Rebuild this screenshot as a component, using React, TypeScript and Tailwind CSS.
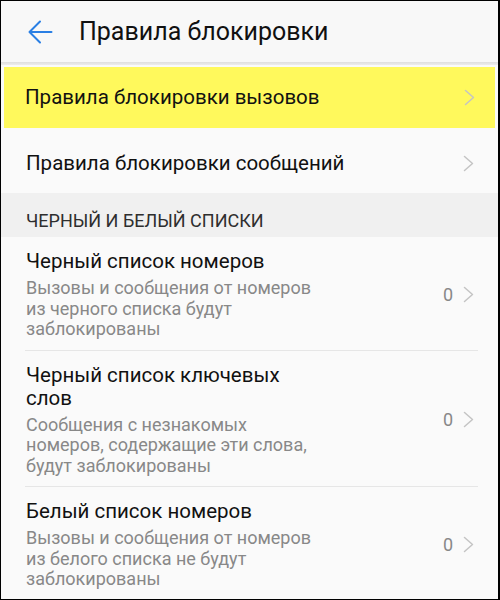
import React from "react";

function Chevron() {
  return (
    <svg width="11" height="17" viewBox="0 0 11 17" fill="none">
      <path d="M1.5 1.5 L9.5 8.5 L1.5 15.5" stroke="#c4c4c4" strokeWidth="1.5" strokeLinecap="round" strokeLinejoin="round" />
    </svg>
  );
}

function ListItem({ title, subtitle, count }: { title: string; subtitle: string; count: string }) {
  return (
    <div className="flex items-center pl-[25px] pr-[24px] pt-[13px] pb-[10px]">
      <div className="w-[292px]">
        <div className="text-[20.5px] leading-[23px] text-[#111111]">{title}</div>
        <div className="mt-[5px] text-[18px] leading-[20.5px] text-[#888888]">{subtitle}</div>
      </div>
      <div className="ml-auto flex items-center gap-[10px]">
        <span className="text-[18px] text-[#888888]">{count}</span>
        <Chevron />
      </div>
    </div>
  );
}

export default function App() {
  return (
    <div
      className="w-[500px] h-[600px] overflow-hidden border-t border-l border-b border-r-2 border-black bg-[#fafafa]"
      style={{ fontFamily: "Roboto, 'Noto Sans', sans-serif" }}
    >
      <div className="h-[61px] flex items-center bg-[#f8f8f8]">
        <div className="ml-[26px] w-[26px] h-[26px]">
          <svg width="26" height="26" viewBox="0 0 26 26" fill="none">
            <path d="M24.5 13 H2.5 M13 2.5 L2.5 13 L13 23.5" stroke="#2a7fe4" strokeWidth="2" strokeLinecap="round" strokeLinejoin="round" />
          </svg>
        </div>
        <div className="ml-[26px] text-[25px] text-[#111111] leading-none">Правила блокировки</div>
      </div>
      <div className="h-[3px] bg-gradient-to-b from-[#dedede] to-[#ededed]" />
      <div className="px-[3px] py-[2px]">
        <div className="h-[61px] bg-[#fff95c] flex items-center pl-[21px] pr-[20px]">
          <span className="text-[20.5px] text-[#111111]">Правила блокировки вызовов</span>
          <span className="ml-auto">
            <Chevron />
          </span>
        </div>
      </div>
      <div className="h-[63px] flex items-center pl-[25px] pr-[24px] pt-[3px]">
        <span className="text-[20.5px] text-[#111111]">Правила блокировки сообщений</span>
        <span className="ml-auto">
          <Chevron />
        </span>
      </div>
      <div className="h-[44px] bg-[#f0f0f0] pl-[25px] pt-[18px]">
        <div className="text-[18px] leading-[20px] text-[#2e2e2e]">ЧЕРНЫЙ И БЕЛЫЙ СПИСКИ</div>
      </div>
      <ListItem
        title="Черный список номеров"
        subtitle="Вызовы и сообщения от номеров из черного списка будут заблокированы"
        count="0"
      />
      <div className="ml-[24px] mr-[20px] h-px bg-[#e6e6e6]" />
      <ListItem
        title="Черный список ключевых слов"
        subtitle="Сообщения с незнакомых номеров, содержащие эти слова, будут заблокированы"
        count="0"
      />
      <div className="ml-[24px] mr-[20px] h-px bg-[#e6e6e6]" />
      <ListItem
        title="Белый список номеров"
        subtitle="Вызовы и сообщения от номеров из белого списка не будут заблокированы"
        count="0"
      />
    </div>
  );
}
